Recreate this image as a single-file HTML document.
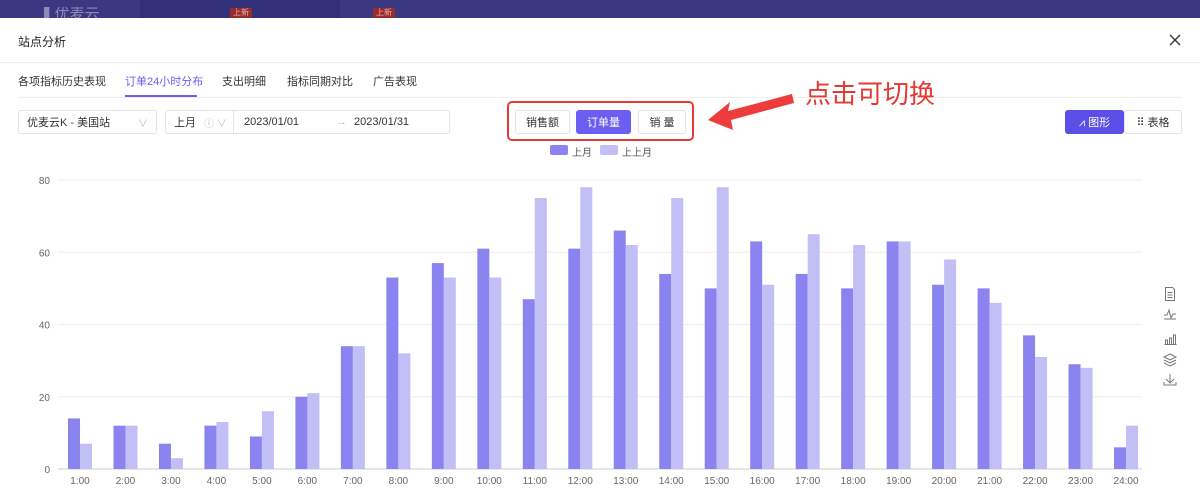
<!DOCTYPE html>
<html><head><meta charset="utf-8"><style>
*{margin:0;padding:0;box-sizing:border-box}
body{width:1200px;height:498px;overflow:hidden;background:#fff;font-family:"Liberation Sans","Noto Sans CJK SC",sans-serif;position:relative;color:#333}
.a{position:absolute}
.box{position:absolute;border:1px solid #e3e3e8;border-radius:3px;font-size:11px;color:#333;display:flex;align-items:center}
.t{position:absolute;top:73px;font-size:11px;color:#333}
</style></head><body>
<div class="a" style="left:0;top:0;width:1200px;height:18px;background:#3b3882"></div>
<div class="a" style="left:140px;top:0;width:200px;height:18px;background:#33307a"></div>
<div class="a" style="left:44px;top:7px;font-size:15px;color:#8d8bb8;line-height:15px;height:11px;overflow:hidden">▌优麦云</div>
<div class="a" style="left:230px;top:8px;width:22px;height:10px;background:#9a2b2b;font-size:8px;color:#e8b0b0;text-align:center;line-height:10px">上新</div>
<div class="a" style="left:373px;top:8px;width:22px;height:10px;background:#9a2b2b;font-size:8px;color:#e8b0b0;text-align:center;line-height:10px">上新</div>
<div class="a" style="left:18px;top:33px;font-size:12px;color:#222">站点分析</div>
<svg class="a" style="left:1169px;top:34px" width="12" height="12"><path d="M1 1L11 11M11 1L1 11" stroke="#333" stroke-width="1.4"/></svg>
<div class="a" style="left:0;top:62px;width:1200px;height:1px;background:#eee"></div>
<div class="t" style="left:18px">各项指标历史表现</div>
<div class="t" style="left:125px;color:#6a5ff0">订单24小时分布</div>
<div class="a" style="left:125px;top:95px;width:72px;height:2px;background:#6a5ff0"></div>
<div class="t" style="left:222px">支出明细</div>
<div class="t" style="left:287px">指标同期对比</div>
<div class="t" style="left:373px">广告表现</div>
<div class="a" style="left:18px;top:97px;width:1164px;height:1px;background:#eee"></div>
<div class="box" style="left:18px;top:110px;width:139px;height:24px;padding-left:8px">优麦云K - 美国站<span style="position:absolute;right:8px;color:#bbb;font-size:10px">∨</span></div>
<div class="box" style="left:165px;top:110px;width:285px;height:24px;padding-left:8px">上月<span style="color:#bbb;font-size:10px;margin-left:8px">ⓘ ∨</span><span style="position:absolute;left:67px;top:0;width:1px;height:22px;background:#e3e3e8"></span><span style="position:absolute;left:78px">2023/01/01</span><span style="position:absolute;left:170px;color:#bbb">→</span><span style="position:absolute;left:188px">2023/01/31</span></div>
<div class="a" style="left:507px;top:101px;width:187px;height:40px;border:2px solid #e53935;border-radius:5px"></div>
<div class="box" style="left:515px;top:110px;width:55px;height:24px;justify-content:center">销售额</div>
<div class="box" style="left:576px;top:110px;width:55px;height:24px;justify-content:center;background:#6a5ff0;border-color:#6a5ff0;color:#fff">订单量</div>
<div class="box" style="left:638px;top:110px;width:48px;height:24px;justify-content:center">销 量</div>
<svg class="a" style="left:700px;top:88px" width="100" height="50"><polygon points="8,32 30,14 28,23 92,6 94,15 31,32 33,42" fill="#ee3b3b"/></svg>
<div class="a" style="left:805px;top:74px;font-size:26px;color:#e53935">点击可切换</div>
<div class="box" style="left:1065px;top:110px;width:59px;height:24px;justify-content:center;background:#5b4fe8;border-color:#5b4fe8;color:#fff">⩘ 图形</div>
<div class="box" style="left:1124px;top:110px;width:58px;height:24px;justify-content:center">⠿ 表格</div>
<div class="a" style="left:550px;top:145px;width:18px;height:10px;background:#8b84f0;border-radius:2px"></div>
<div class="a" style="left:572px;top:144px;font-size:10px;color:#555">上月</div>
<div class="a" style="left:600px;top:145px;width:18px;height:10px;background:#c2bff7;border-radius:2px"></div>
<div class="a" style="left:622px;top:144px;font-size:10px;color:#555">上上月</div>
<svg class="a" style="left:0;top:0" width="1200" height="498" id="c"></svg>
<svg class="a" style="left:1160px;top:284px" width="20" height="106" fill="none" stroke="#777" stroke-width="1">
<path d="M5.5 3.5h7l2 2v11h-9z M7.5 8.5h5M7.5 11h5M7.5 13.5h5"/>
<path d="M4 31h3l2-5 2 8 2-4h3M4 35h12"/>
<path d="M4.5 60.5h12M5.5 60v-4h2v4M9.5 60v-6h2v6M13.5 60v-9h2v9"/>
<path d="M10 70l6 3-6 3-6-3zM4 76l6 3 6-3M4 79l6 3 6-3"/>
<path d="M10 90v9M6 95l4 4 4-4M4 98v3h12v-3"/>
</svg>
<script>
var d=[14,12,7,12,9,20,34,53,57,61,47,61,66,54,50,63,54,50,63,51,50,37,29,6];
var l=[7,12,3,13,16,21,34,32,53,53,75,78,62,75,78,51,65,62,63,58,46,31,28,12];
var s='',k=3.6125;
for(var i=0;i<=4;i++){var y=469-i*20*k;s+='<line x1="58" x2="1142" y1="'+y+'" y2="'+y+'" stroke="'+(i?'#eee':'#ccc')+'"/><text x="50" y="'+(y+4)+'" text-anchor="end" font-size="10" fill="#666">'+(i*20)+'</text>';}
for(var i=0;i<24;i++){var cx=80+i*45.48;
s+='<rect x="'+(cx-12)+'" y="'+(469-d[i]*k)+'" width="12" height="'+(d[i]*k)+'" fill="#8b84f0"/>';
s+='<rect x="'+cx+'" y="'+(469-l[i]*k)+'" width="12" height="'+(l[i]*k)+'" fill="#c2bff7"/>';
s+='<text x="'+cx+'" y="484" text-anchor="middle" font-size="10" fill="#666">'+(i+1)+':00</text>';}
document.getElementById('c').innerHTML=s;
</script>
</body></html>
